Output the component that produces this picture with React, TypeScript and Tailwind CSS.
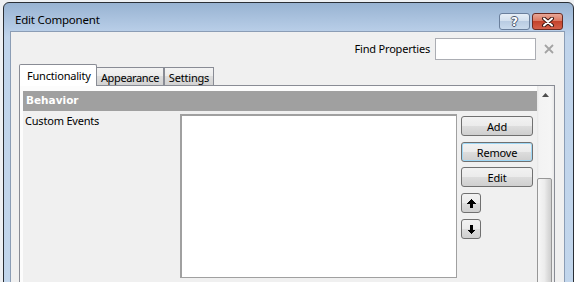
const btn =
  "flex items-center justify-center rounded-[3px] border border-[#707070] bg-[linear-gradient(to_bottom,#f2f2f2_0%,#ebebeb_50%,#dddddd_50%,#cfcfcf_100%)] text-[11px] leading-none";

function ArrowUp() {
  return (
    <svg width="9" height="9" viewBox="0 0 9 9" shapeRendering="crispEdges">
      <polygon points="4.5,0 9,4.5 6,4.5 6,9 3,9 3,4.5 0,4.5" fill="#000" />
    </svg>
  );
}

function ArrowDown() {
  return (
    <svg width="9" height="9" viewBox="0 0 9 9" shapeRendering="crispEdges">
      <polygon points="3,0 6,0 6,4.5 9,4.5 4.5,9 0,4.5 3,4.5" fill="#000" />
    </svg>
  );
}

export default function App() {
  return (
    <div className="h-screen w-full overflow-hidden bg-[#eef0f3] font-['Noto_Sans',sans-serif] text-[11px] tracking-[-0.2px] text-black">
      <div className="h-[2px]" />
      {/* window frame */}
      <div className="ml-[3px] h-[320px] w-[571px] rounded-t-[6px] border border-[#2a2f36] bg-[linear-gradient(to_bottom,#98b3d2_0px,#b6cce6_26px,#c0d4eb_34px,#c2d6ec_100%)]">
        {/* title bar */}
        <div className="flex h-[28px] justify-between pl-[11px] pr-[10px]">
          <div className="pt-[9px] text-[11.5px] leading-[16px] text-black">Edit Component</div>
          <div className="flex gap-[2px] pt-[10px]">
            <div className="flex h-[17px] w-[31px] items-center justify-center rounded-[3px] border border-[#6a7f9c] bg-[linear-gradient(to_bottom,#e6eef7_0%,#d3e0ee_45%,#b9cce2_50%,#c9daec_100%)]">
              <span className="font-['DejaVu_Sans',sans-serif] text-[12px] font-bold leading-none text-white [text-shadow:1px_0_0_#4a5a70,-1px_0_0_#4a5a70,0_1px_0_#4a5a70,0_-1px_0_#4a5a70]">
                ?
              </span>
            </div>
            <div className="flex h-[17px] w-[31px] items-center justify-center rounded-[3px] border border-[#6b2b22] bg-[linear-gradient(to_bottom,#e9a796_0%,#db7a64_45%,#c4432c_50%,#d4604a_100%)]">
              <svg width="14" height="10" viewBox="0 0 14 10">
                <path d="M3 1.5 L11 8.5 M11 1.5 L3 8.5" stroke="#3b1711" strokeWidth="4" strokeLinecap="round" />
                <path d="M3 1.5 L11 8.5 M11 1.5 L3 8.5" stroke="#fff" strokeWidth="2" strokeLinecap="round" />
              </svg>
            </div>
          </div>
        </div>

        {/* client area */}
        <div className="ml-[6px] mr-[8px] h-[300px] border-l border-r border-t border-[#8b9db5] bg-[#f0f0f0]">
          {/* find row */}
          <div className="mt-[6px] flex h-[22px] items-center justify-end pr-[10px]">
            <span className="mr-[5px] leading-[16px]">Find Properties</span>
            <div className="h-[22px] w-[101px] border border-[#abadb3] bg-white" />
            <div className="ml-[7px] flex w-[11px] items-center justify-center">
              <svg width="10" height="10" viewBox="0 0 10 10">
                <path d="M1 1 L9 9 M9 1 L1 9" stroke="#a3a3a3" strokeWidth="1.8" />
              </svg>
            </div>
          </div>

          {/* tabs */}
          <div className="ml-[8px] mt-[4px] flex h-[21px] items-end">
            <div className="relative z-10 -mb-px h-[22px] w-[78px] rounded-t-[2px] border border-b-0 border-[#898c95] bg-white pl-[7px] pt-[3px] leading-[16px]">
              Functionality
            </div>
            <div className="flex h-[18px] w-[67px] justify-center border-r border-t border-[#898c95] bg-[linear-gradient(to_bottom,#f3f3f3_0%,#ebebeb_50%,#dddddd_50%,#d2d2d2_100%)] pt-[2px] leading-[16px] tracking-[-0.35px]">
              Appearance
            </div>
            <div className="flex h-[18px] w-[50px] justify-center border-l border-r border-t border-[#898c95] bg-[linear-gradient(to_bottom,#f3f3f3_0%,#ebebeb_50%,#dddddd_50%,#d2d2d2_100%)] pt-[2px] leading-[16px]">
              Settings
            </div>
          </div>

          {/* tab panel */}
          <div className="ml-[8px] mr-[9px] flex h-[260px] border border-[#898c95] bg-[#fcfcfc]">
            <div className="flex-1 pl-[3px] pt-[5px]">
              <div className="h-full bg-[#f0f0f0]">
                <div className="flex h-[20px] items-center bg-[#a0a0a0] pl-[3px] font-['DejaVu_Sans',sans-serif] text-[10.5px] font-bold tracking-normal text-white">
                  Behavior
                </div>
                <div className="flex">
                  <div className="w-[157px] pl-[2px] pt-[2px] leading-[16px]">Custom Events</div>
                  <div className="mt-[3px] h-[164px] w-[277px] border-b border-l-2 border-r border-t-2 border-[#a0a0a0] bg-white" />
                  <div className="ml-[4px] mt-[5px] flex w-[72px] flex-col">
                    <button className={`${btn} h-[20px] w-full`}>Add</button>
                    <button
                      className={`${btn} mt-[6px] h-[20px] w-full border-[#3c8fd0] shadow-[inset_0_0_0_1px_#9fd8f6]`}
                    >
                      Remove
                    </button>
                    <button className={`${btn} mt-[5px] h-[20px] w-full`}>Edit</button>
                    <button className={`${btn} mt-[6px] h-[20px] w-[20px]`}>
                      <ArrowUp />
                    </button>
                    <button className={`${btn} mt-[6px] h-[20px] w-[20px]`}>
                      <ArrowDown />
                    </button>
                  </div>
                </div>
              </div>
            </div>

            {/* scrollbar */}
            <div className="w-[17px] bg-[linear-gradient(to_right,#e6e6e6_0px,#f3f3f3_2px,#f5f5f5_14px,#e9e9e9_17px)]">
              <div className="flex h-[17px] items-center justify-center">
                <svg width="7" height="4" viewBox="0 0 7 4">
                  <polygon points="3.5,0 7,4 0,4" fill="#4d4d4d" />
                </svg>
              </div>
              <div className="mt-[75px] h-[160px] w-[15px] rounded-[2px] border border-[#979797] bg-[linear-gradient(to_right,#f7f7f7_0%,#ececec_50%,#d9d9d9_80%,#cfcfcf_100%)]" />
            </div>
          </div>
        </div>
      </div>
    </div>
  );
}
